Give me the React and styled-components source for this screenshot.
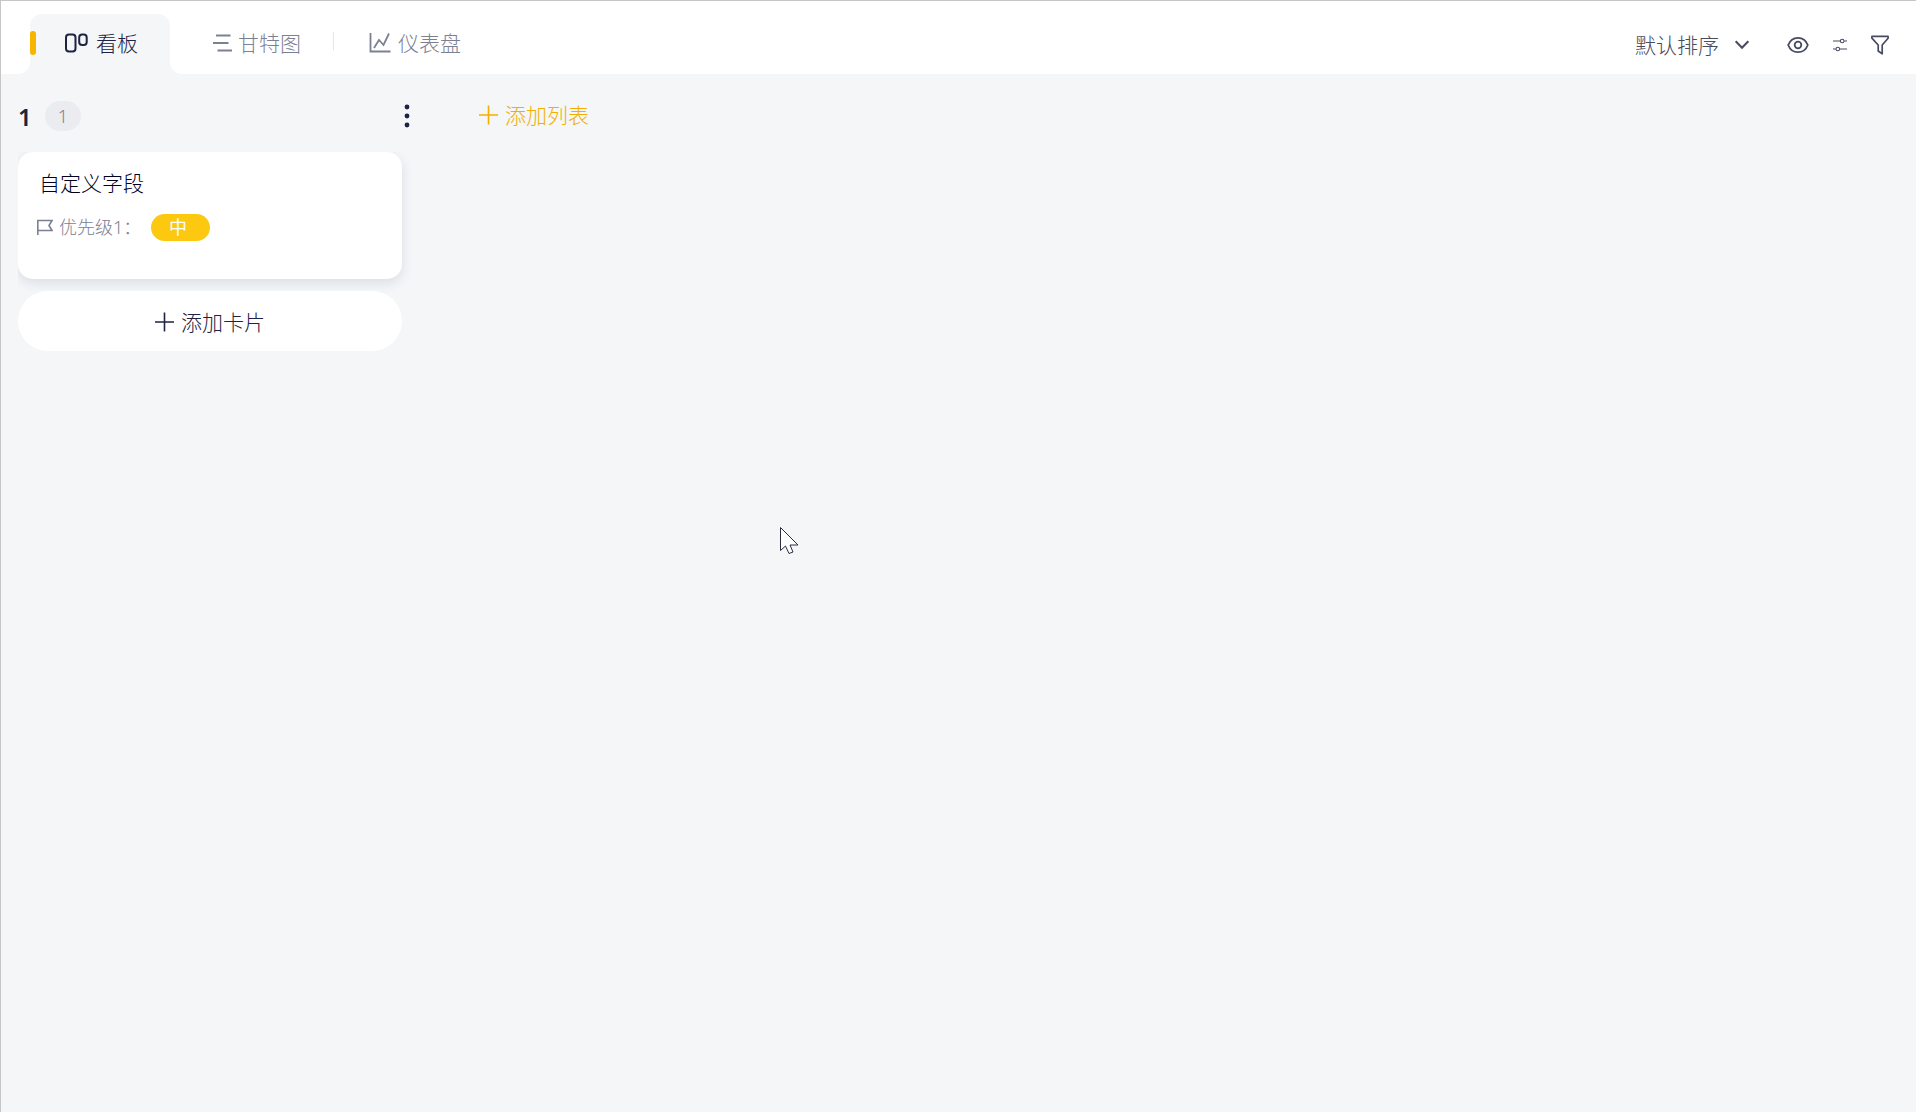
import styled, { createGlobalStyle } from "styled-components";
import { useState } from "react";

const GlobalStyle = createGlobalStyle`
    * {
        box-sizing: border-box;
    }
    body {
        margin: 0;
        background-color: #f4f6f8;
        color: #1c2344;
        font-family: "Noto Sans", "Noto Sans CJK SC", sans-serif;
        font-weight: 300;
    }
    button, select {
        font: inherit;
        color: inherit;
        border: none;
        padding: 0;
        margin: 0;
        background: none;
        cursor: pointer;
    }
`;

function BoardIcon() {
    return (
        <svg width="26" height="20" viewBox="0 0 26 20" fill="none" stroke="currentColor" strokeWidth="2" aria-hidden="true">
            <rect x="1" y="1.5" width="9.5" height="17" rx="3" />
            <rect x="14.2" y="1.5" width="7.5" height="10.5" rx="3" />
        </svg>
    );
}

function GanttIcon() {
    return (
        <svg width="20" height="20" viewBox="0 0 20 20" fill="none" stroke="currentColor" strokeWidth="2" aria-hidden="true">
            <path d="M3 2.5h14.5M0 10h15.5M4.5 17.5H19" />
        </svg>
    );
}

function ChartIcon() {
    return (
        <svg width="24" height="20" viewBox="0 0 24 20" fill="none" stroke="currentColor" strokeWidth="1.8" aria-hidden="true">
            <path d="M1.500 0v18.500h20" />
            <path d="M5 15l5-8 4.500 5 5.500-11.500" />
        </svg>
    );
}

function PlusIcon() {
    return (
        <svg width="20" height="20" viewBox="0 0 20 20" fill="none" stroke="currentColor" strokeWidth="1.6" aria-hidden="true">
            <path d="M9.500 .5v19M0 10h19" />
        </svg>
    );
}

function EyeIcon() {
    return (
        <svg width="22" height="18" viewBox="0 0 22 18" fill="none" stroke="currentColor" strokeWidth="1.8" aria-hidden="true">
            <path d="M1.2 9C3 4.200 6.700 1.800 11 1.800S19 4.200 20.800 9C19 13.800 15.300 16.200 11 16.200S3 13.800 1.200 9z" />
            <circle cx="11" cy="9" r="3.300" />
        </svg>
    );
}

function SlidersIcon() {
    return (
        <svg width="14" height="14" viewBox="0 0 14 14" fill="none" stroke="currentColor" strokeWidth="1.1" aria-hidden="true">
            <path d="M0 3h7.200M11.200 3H14M0 11h2.800M6.800 11H14" />
            <circle cx="9.200" cy="3" r="1.800" />
            <circle cx="4.800" cy="11" r="1.800" />
        </svg>
    );
}

function FunnelIcon() {
    return (
        <svg width="18" height="20" viewBox="0 0 18 20" fill="none" stroke="currentColor" strokeWidth="1.700" strokeLinejoin="round" aria-hidden="true">
            <path d="M.9 1.400h16.200v1.800L11.200 10v8.800L7.200 16V10L.9 3.200z" />
        </svg>
    );
}

function FlagIcon() {
    return (
        <svg width="16" height="16" viewBox="0 0 16 16" fill="none" stroke="currentColor" strokeWidth="1.600" aria-hidden="true">
            <path d="M.8 16V1.500h14.200l-3 5 3 5H.8" />
        </svg>
    );
}

const tabs = [
    { id: "board", label: "看板", Icon: BoardIcon },
    { id: "gantt", label: "甘特图", Icon: GanttIcon },
    { id: "chart", label: "仪表盘", Icon: ChartIcon, divided: true },
];

function App() {
    const [current, setCurrent] = useState("board");

    return (
        <Page>
            <GlobalStyle />
            <Header>
                <Tabs role="tablist">
                    {tabs.map(({ id, label, Icon, divided }) => (
                        <TabSlot key={id} role="presentation">
                            {divided && <Divider />}
                            <Tab role="tab" aria-selected={current === id} $active={current === id} onClick={() => setCurrent(id)}>
                                <Mark $active={current === id} />
                                <Icon />
                                {label}
                            </Tab>
                        </TabSlot>
                    ))}
                </Tabs>
                <Tools>
                    <Sort>
                        <SortSelect aria-label="排序">
                            <option>默认排序</option>
                        </SortSelect>
                        <svg width="14" height="10" viewBox="0 0 14 10" fill="none" stroke="currentColor" strokeWidth="2" aria-hidden="true">
                            <path d="M.7 1.200L7 7.800l6.300-6.600" />
                        </svg>
                    </Sort>
                    <ToolButton aria-label="显示"><EyeIcon /></ToolButton>
                    <ToolButton aria-label="设置"><SlidersIcon /></ToolButton>
                    <ToolButton aria-label="筛选"><FunnelIcon /></ToolButton>
                </Tools>
            </Header>
            <Board>
                <Column>
                    <ColumnHeader>
                        <ColumnTitle>1</ColumnTitle>
                        <Count>1</Count>
                        <MenuButton aria-label="更多">
                            <svg width="6" height="24" viewBox="0 0 6 24" fill="currentColor" aria-hidden="true">
                                <circle cx="3" cy="3" r="2.400" />
                                <circle cx="3" cy="12" r="2.400" />
                                <circle cx="3" cy="21" r="2.400" />
                            </svg>
                        </MenuButton>
                    </ColumnHeader>
                    <CardList>
                        <Card>
                            <CardTitle>自定义字段</CardTitle>
                            <Field>
                                <FlagIcon />
                                <FieldName>优先级1：</FieldName>
                                <Priority>中</Priority>
                            </Field>
                        </Card>
                        <AddCard><PlusIcon />添加卡片</AddCard>
                    </CardList>
                </Column>
                <AddList><PlusIcon />添加列表</AddList>
            </Board>
            <Pointer width="20" height="30" viewBox="0 0 20 30" aria-hidden="true">
                <path d="M.5.5v23l5-4.500 3.500 7.500 4-1.500-3-7h8z" fill="#fff" stroke="#2b2d45" />
            </Pointer>
        </Page>
    );
}

const Page = styled.div`
    position: relative;
    min-height: 100vh;
    border-top: 1px solid #c6c6c6;
    border-left: 1px solid #c6c6c6;
`;

const Header = styled.header`
    display: flex;
    justify-content: space-between;
    height: 73px;
    padding: 13px 27px 0 29px;
    background-color: #fff;
`;

const Tabs = styled.div`
    display: flex;
    align-items: flex-start;
`;

const TabSlot = styled.div`
    display: flex;
`;

const Tab = styled.button`
    position: relative;
    display: flex;
    align-items: center;
    gap: 5px;
    height: 60px;
    margin-right: ${({ $active }) => ($active ? "8px" : "0")};
    padding: 0 32px 2px 0;
    border-radius: 12px 12px 0 0;
    background-color: ${({ $active }) => ($active ? "#f4f6f8" : "transparent")};
    color: ${({ $active }) => ($active ? "#1c2344" : "#7b8193")};
    font-size: 21px;
    line-height: 30px;
    white-space: nowrap;

    /* curved feet that join the active tab to the board */
    &::before, &::after {
        content: "";
        display: ${({ $active }) => ($active ? "block" : "none")};
        position: absolute;
        bottom: 0;
        width: 12px;
        height: 12px;
    }
    &::before {
        right: 100%;
        background: radial-gradient(circle at 0 0, #fff 12px, #f4f6f8 12px);
    }
    &::after {
        left: 100%;
        background: radial-gradient(circle at 100% 0, #fff 12px, #f4f6f8 12px);
    }
`;

const Mark = styled.span`
    width: 6px;
    height: 24px;
    margin-right: 24px;
    border-radius: 3px;
    background-color: ${({ $active }) => ($active ? "#f7b500" : "transparent")};
`;

const Divider = styled.span`
    width: 1px;
    height: 18px;
    margin-top: 18px;
    background-color: #e4e5e9;
`;

const Tools = styled.div`
    display: flex;
    align-items: center;
    gap: 24px;
    height: 62px;
    color: #464b62;
`;

const Sort = styled.label`
    display: flex;
    align-items: center;
    gap: 16px;
    margin-right: 14px;
`;

const SortSelect = styled.select`
    appearance: none;
    font-size: 21px;
    line-height: 30px;
`;

const ToolButton = styled.button`
    display: flex;
`;

const Board = styled.main`
    display: flex;
    align-items: flex-start;
    gap: 59px;
    padding: 26px 17px;
`;

const Column = styled.section`
    width: 402px;
`;

const ColumnHeader = styled.div`
    display: flex;
    align-items: center;
    height: 32px;
    padding-right: 10px;
`;

const ColumnTitle = styled.h2`
    margin: 0;
    width: 27px;
    padding-top: 2px;
    font-size: 24px;
    line-height: 32px;
    font-weight: 600;
`;

const Count = styled.span`
    width: 36px;
    height: 30px;
    border-radius: 15px;
    background-color: #ebecf0;
    color: #7b8193;
    font-size: 18px;
    line-height: 30px;
    text-align: center;
`;

const MenuButton = styled.button`
    display: flex;
    margin-left: auto;
`;

const CardList = styled.div`
    display: flex;
    flex-direction: column;
    gap: 12px;
    margin-top: 20px;
    padding: 0 18px 12px 0;
    overflow: hidden;
`;

const Card = styled.article`
    height: 127px;
    padding: 16px 19px;
    border-radius: 15px;
    background-color: #fff;
    box-shadow: 0 4px 12px rgba(43, 51, 82, 0.12);
`;

const CardTitle = styled.h3`
    margin: 0;
    padding-left: 2px;
    font-size: 21px;
    line-height: 30px;
    font-weight: 300;
    color: #00001e;
`;

const Field = styled.div`
    display: flex;
    align-items: center;
    height: 28px;
    margin-top: 15px;
    color: #7b8193;
    font-size: 18px;
    line-height: 28px;
`;

const FieldName = styled.span`
    width: 98px;
    padding-left: 6px;
    white-space: nowrap;
`;

const Priority = styled.span`
    width: 59px;
    height: 27px;
    padding-left: 18px;
    border-radius: 14px;
    background-color: #fdc910;
    color: #fff;
    font-weight: 400;
    line-height: 27px;
`;

const AddButton = styled.button`
    display: flex;
    align-items: center;
    justify-content: center;
    gap: 6px;
    font-size: 21px;
    line-height: 30px;
    white-space: nowrap;
`;

const AddCard = styled(AddButton)`
    position: relative;
    height: 60px;
    padding-top: 2px;
    border-radius: 30px;
    background-color: #fff;
`;

const AddList = styled(AddButton)`
    color: #f3ae00;
`;

const Pointer = styled.svg`
    position: absolute;
    left: 779px;
    top: 526px;
    pointer-events: none;
`;

export default App;
